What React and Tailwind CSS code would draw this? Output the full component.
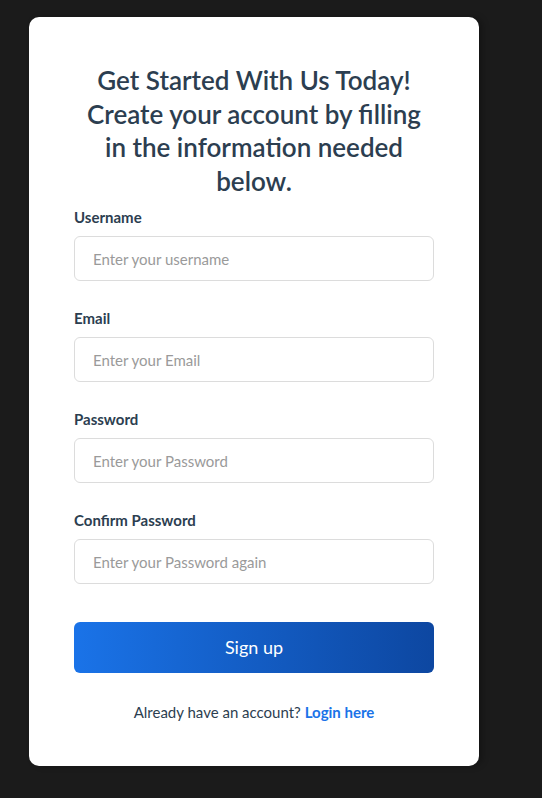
const fields = [
  { label: 'Username', type: 'text', placeholder: 'Enter your username' },
  { label: 'Email', type: 'email', placeholder: 'Enter your Email' },
  { label: 'Password', type: 'password', placeholder: 'Enter your Password' },
  { label: 'Confirm Password', type: 'password', placeholder: 'Enter your Password again' },
]

export default function App() {
  return (
    <div className="min-h-screen bg-[#1b1b1b] pt-[17px] pl-[29px] font-['Lato','Noto_Sans',sans-serif] text-[#2c3e50]">
      {/* Signup card */}
      <div className="w-[450px] bg-white rounded-[10px] px-[45px] pt-[47px] pb-[42px] shadow-[4px_0_6px_rgba(0,0,0,0.25)]">
        <h1 className="text-center text-[26px] leading-[33.5px] font-semibold px-[8px] mb-[10px]">
          Get Started With Us Today! Create your account by filling in the information needed below.
        </h1>

        <form className="flex flex-col" onSubmit={(e) => e.preventDefault()}>
          {fields.map((f) => (
            <div key={f.label} className="flex flex-col mb-[28px]">
              <label className="text-[15px] leading-[18px] font-bold mb-[10px]">{f.label}</label>
              <input
                type={f.type}
                placeholder={f.placeholder}
                className="h-[45px] w-full border border-[#dcdcdc] rounded-[6px] px-[18px] text-[15px] outline-none placeholder:text-[#9a9a9a]"
              />
            </div>
          ))}

          <button
            type="submit"
            className="mt-[10px] h-[51px] w-full rounded-[6px] bg-gradient-to-r from-[#1a73e8] to-[#0d47a1] text-white text-[18px]"
          >
            Sign up
          </button>
        </form>

        <p className="text-center text-[15px] mt-[28px]">
          Already have an account?{' '}
          <a href="#" className="font-bold text-[#1a73e8]">Login here</a>
        </p>
      </div>
    </div>
  )
}
